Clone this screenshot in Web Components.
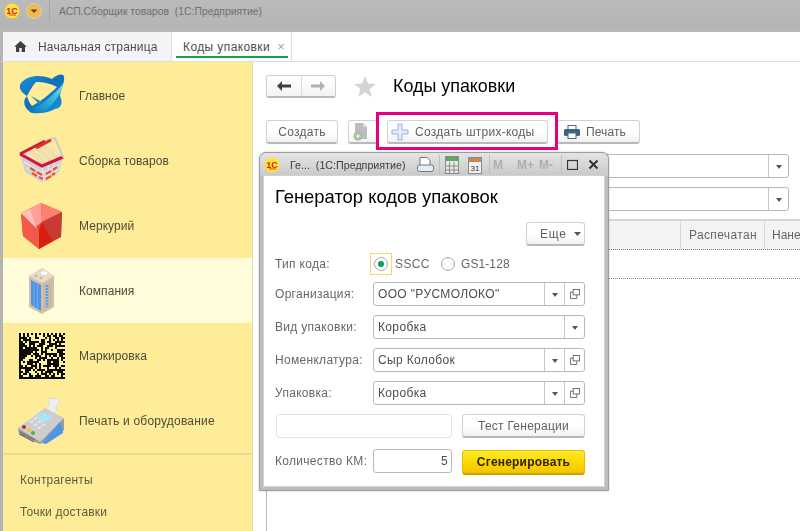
<!DOCTYPE html>
<html lang="ru"><head><meta charset="utf-8"><title>Коды упаковки</title>
<style>
html,body{margin:0;padding:0;width:800px;height:531px;overflow:hidden;background:#fff;font:12px "Liberation Sans",Arial,sans-serif;color:#444}
</style></head><body>
<template id="t-shell"><style>
:host{display:flex;flex-direction:column;width:800px;height:531px;position:relative;overflow:hidden;filter:blur(.4px)}
.body{flex:1;display:flex;min-height:0;border-left:3px solid #b4b4b4}
</style><slot name="title"></slot><slot name="tabs"></slot><div class="body"><slot name="side"></slot><slot name="main"></slot></div><slot name="over"></slot></template>

<template id="t-logo"><style>
:host{display:block;flex:none;width:16px;height:16px}svg{display:block}
</style><svg width="16" height="16" viewBox="0 0 16 16"><circle cx="8" cy="8" r="7.500" fill="#ffe23a"/><text x="8" y="11" text-anchor="middle" font-family="Liberation Sans" font-weight="700" font-size="9" fill="#d9202a">1С</text><path d="M5 12h7" stroke="#d9202a" stroke-width=".8"/></svg></template>

<template id="t-title"><style>
:host{display:flex;align-items:center;height:32px;background:linear-gradient(#bbb,#b5b5b5 80%,#b9b9b9);padding:0 0 10px 4px;box-sizing:border-box;font-size:10.400px;color:#6f6f6f}
svg{display:block;flex:none}.sep{width:1px;height:22px;background:#a6a6a6;margin:0 9px 0 7px}.t{white-space:pre}
</style><x-logo></x-logo><svg style="margin-left:6px" width="16" height="16" viewBox="0 0 16 16"><circle cx="8" cy="8" r="7.500" fill="#f1bb53" stroke="#d7d0bd"/><path d="M4.500 6.500h7L8 10z" fill="#5f4a20"/></svg>
<div class="sep"></div><span class="t"><slot></slot></span></template>

<template id="t-tabs"><style>
:host{display:flex;height:30px;background:#fff;border-left:3px solid #b4b4b4;box-sizing:border-box;border-bottom:1px solid #ddd;font-size:12px;color:#4d4d4d}
.tab{display:flex;align-items:center;background:#f6f3f7;box-sizing:border-box}
.home{width:169px;padding-left:11px;gap:11px;border-right:1px solid #e2e0e2;letter-spacing:.2px}
.cur{width:120px;padding-left:11px;background:#fff;position:relative;border-right:1px solid #ddd;letter-spacing:.4px}
.cur::after{content:"";position:absolute;left:4px;right:3px;bottom:3px;height:2px;background:#16a34f}
.x{margin-left:7px;color:#a4a4a4;font-size:13px;letter-spacing:0}
.rest{flex:1;background:#fff}
</style><div class="tab home"><svg width="13" height="11" viewBox="0 0 15 13"><path d="M7.500 0L0 6.800h2.200V13h3.900V8.400h2.800V13h3.900V6.800H15z" fill="#3f3f3f"/></svg><span>Начальная страница</span></div><div class="tab cur"><span>Коды упаковки</span><span class="x">×</span></div><div class="rest"></div></template>

<template id="t-sidebar"><style>
:host{display:flex;flex-direction:column;width:250px;flex:none;background:#ffec99;box-sizing:border-box;height:100%;border-right:1px solid #e5dcae;padding-top:1px}
.foot{border-top:2px solid #ecdc92;padding:9px 0 0 17px;display:flex;flex-direction:column;color:#5f5a3c;letter-spacing:.2px}
.foot ::slotted(span){height:32px;display:flex;align-items:center}
</style><slot></slot><div class="foot"><slot name="foot"></slot></div></template>

<template id="t-side"><style>
:host{display:flex;align-items:center;height:65px;box-sizing:border-box;padding-left:15px;gap:14px;color:#4e4b38;letter-spacing:.06px}
:host([active]){background:#fffcd9}
.i{width:47px;height:50px;display:flex;align-items:center;justify-content:center;flex:none}
</style><div class="i"><slot name="icon"></slot></div><slot></slot></template>

<template id="t-btn"><style>
:host{display:inline-flex;align-items:center;justify-content:center;height:24px;box-sizing:border-box;padding:0 4px;gap:6px;border:1px solid #d2d2d2;border-bottom:2px solid #b9b9b9;border-radius:3px;background:linear-gradient(#fff,#fff 50%,#f1f1f1);color:#5f5f5f;letter-spacing:.25px;white-space:nowrap;flex:none}
:host([primary]){background:linear-gradient(#ffea28,#fbd400 60%,#f2c400);border-color:#e3bd00;border-bottom-color:#c9a400;color:#2c2300;font-weight:700;letter-spacing:.2px}
:host([start]){justify-content:flex-start}
::slotted(svg){flex:none}
</style><slot></slot></template>

<template id="t-field"><style>
:host{display:flex;height:24px;box-sizing:border-box;border:1px solid #b9b9b9;border-radius:3px;background:#fff;color:#4d4d4d;letter-spacing:.35px;overflow:hidden}
:host([pale]){border-color:#e2e2e2}
.v{flex:1;min-width:0;display:flex;align-items:center;padding:0 3px 0 4px;white-space:nowrap}
:host([right]) .v{justify-content:flex-end}
.b{width:20px;flex:none;display:none;align-items:center;justify-content:center;border-left:1px solid #c6c6c6;box-sizing:border-box}
:host([drop]) .d,:host([open]) .o{display:flex}
.d i{width:0;height:0;border:3.500px solid transparent;border-top:4px solid #555;border-bottom:0;margin-top:1px}
</style><div class="v"><slot></slot></div><div class="b d"><i></i></div><div class="b o"><svg width="10" height="10" viewBox="0 0 11 11" fill="none" stroke="#666"><rect x="3.500" y=".5" width="7" height="6" fill="#fff"/><path d="M3.500 3.500H.5v7h7V6.500"/></svg></div></template>

<template id="t-page"><style>
:host{display:block;flex:1;min-width:0;padding:13px 0 0 13px;box-sizing:border-box;overflow:hidden;background:#fff}
.head{display:flex;align-items:center;height:23px;margin-bottom:22px}
.nav{display:flex;width:70px;height:23px;box-sizing:border-box;border:1px solid #cfcfcf;border-bottom:2px solid #b9b9b9;border-radius:3px;background:linear-gradient(#fff,#f4f4f4)}
.nav div{flex:1;display:flex;align-items:center;justify-content:center}.nav div+div{border-left:1px solid #ddd}
.star{margin:0 17px 0 18px;display:block;flex:none}
h1{font:400 17.900px "Liberation Sans",Arial,sans-serif;color:#000;margin:0}
.bar{display:flex;height:24px;gap:10px;margin-bottom:10px}
.fields{display:flex;flex-direction:column;gap:9px;margin-right:11px}
.tbl{margin-top:8px;border-top:2px solid #d6d6d6;border-left:1px solid #bdbdbd;height:400px}
.th{display:flex;height:29px;box-sizing:border-box;background:#f6f3f7;border-bottom:1px dotted #777;color:#666;letter-spacing:.35px}
.th div{display:flex;align-items:center;box-sizing:border-box;border-right:1px solid #d8d8d8;padding-left:8px;white-space:nowrap}
.r{height:29px;border-bottom:1px dotted #8a8a8a;box-sizing:border-box}
</style>
<div class="head"><div class="nav"><div><svg width="14" height="10" viewBox="0 0 14 10"><path d="M5 0v3.500h9v3H5V10L0 5z" fill="#404040"/></svg></div><div><svg width="14" height="10" viewBox="0 0 14 10"><path d="M9 0v3.500H0v3h9V10l5-5z" fill="#b0b0b0"/></svg></div></div>
<svg class="star" width="22" height="21" viewBox="0 0 22 21"><path d="M11 0l3 7.500 8 .5-6.200 5.100 2 7.900L11 16.500 4.200 21l2-7.900L0 8l8-.5z" fill="#d5d5d5"/></svg><h1>Коды упаковки</h1></div>
<div class="bar"><x-btn style="width:72px">Создать</x-btn>
<x-btn start style="width:30px;padding-left:3px"><svg width="17" height="19" viewBox="0 0 17 19"><path d="M3 1h8l4 4v12H3z" fill="#bdbdbd"/><path d="M11 1v4h4z" fill="#dcdcdc"/><circle cx="6" cy="14" r="4.500" fill="#a3bd9f"/><path d="M6 11.500v5M3.500 14h5" stroke="#fff"/></svg></x-btn>
<x-btn start style="width:161px;margin-left:-1px;padding-left:3px"><svg width="18" height="18" viewBox="0 0 18 18"><path d="M7 1h4v6h6v4h-6v6H7v-6H1V7h6z" fill="#e3edfc" stroke="#8fb4ea" stroke-linejoin="round"/></svg>Создать штрих-коды</x-btn>
<x-btn start style="width:83px;margin-left:-1px;padding-left:6px;letter-spacing:.1px"><svg width="16" height="14" viewBox="0 0 16 14"><rect x="4" y=".5" width="8" height="4" fill="#fff" stroke="#4a6b8a"/><rect x="0" y="4" width="16" height="7" rx="1.500" fill="#3d6288"/><rect x="4" y="8" width="8" height="5.500" fill="#fff" stroke="#4a6b8a"/></svg>Печать</x-btn></div>
<div class="fields"><x-field drop></x-field><x-field drop></x-field></div>
<div class="tbl"><div class="th"><div style="flex:1"></div><div style="width:84px;flex:none">Распечатан</div><div style="width:35px;flex:none;border:0;letter-spacing:0;padding-left:7px">Нане</div></div><div class="r"></div></div></template>

<template id="t-dialog"><style>
:host{position:absolute;left:259px;top:152px;width:350px;height:339px;box-sizing:border-box;display:flex;flex-direction:column;background:#bdbdbd;border:1px solid #9d9d9d;border-radius:7px 7px 0 0;box-shadow:0 0 2px rgba(0,0,0,.25)}
.cap{height:23px;display:flex;align-items:center;flex:none;padding:0 0 0 4px;background:linear-gradient(#e4e4e4,#c9c9c9);border-radius:6px 6px 0 0;font-size:10.700px;color:#3d3d3d;white-space:pre}
.cap .tt{margin-left:10px;width:116px;flex:none}
.cap svg{display:block;flex:none}
.s{width:1px;height:19px;background:#bfbfbf;flex:none}
.m{color:#b3ada5;font-weight:700;font-size:12px;flex:none;box-sizing:border-box}
.body{flex:1;margin:0 4px 4px;background:#fff;padding:10px 19px 0 11px;min-height:0;box-shadow:0 0 0 1px #d2d2d2}
h2{font:400 18.400px "Liberation Sans",Arial,sans-serif;color:#000;margin:0;height:22px;line-height:22px}
.more{display:flex;justify-content:flex-end;margin:14px 0 7px}
.grid{display:grid;grid-template-columns:98px 212px;row-gap:9px;align-items:center;color:#666;letter-spacing:.3px}
.grid>.first{margin-bottom:-2px}
.radio{display:flex;align-items:center;height:22px;color:#666}
.focus{width:22px;height:22px;box-sizing:border-box;border:1px solid #f8d66a;margin-left:-3px;display:flex;align-items:center;justify-content:center}
.rb{width:14px;height:14px;box-sizing:border-box;border:1px solid #a9a9a9;border-radius:50%;display:flex;align-items:center;justify-content:center;background:#fff}
.rb i{width:6px;height:6px;border-radius:50%;background:#0f9d58}
.two{display:flex;gap:10px;align-items:center}
.row3{grid-column:1/-1;display:grid;column-gap:10px}
</style>
<div class="cap"><x-logo></x-logo>
<span class="tt">Ге...  (1С:Предприятие)</span>
<svg style="margin-left:11px" width="17" height="15" viewBox="0 0 17 15"><path d="M3 .5h7l3 3V9H3z" fill="#fff" stroke="#777"/><rect x=".5" y="8" width="16" height="6.500" rx="2" fill="#e8edf2" stroke="#6d7a88"/></svg><span class="s" style="margin:0 5px"></span>
<svg width="14" height="18" viewBox="0 0 14 18"><rect x=".5" y=".5" width="13" height="17" fill="#e7e7e7" stroke="#8a8a8a"/><rect x="1" y="1" width="12" height="4" fill="#58ab57"/><path d="M4.500 6v11M9 6v11M1 10h12M1 14h12" stroke="#8a8a8a"/></svg>
<svg style="margin-left:9px" width="14" height="18" viewBox="0 0 14 18"><rect x=".5" y="1.500" width="13" height="16" fill="#f2f2f2" stroke="#8a8a8a"/><rect x="1" y="2" width="12" height="4" fill="#c8875b"/><text x="7" y="15" font-size="8" text-anchor="middle" fill="#333" font-family="Liberation Sans">31</text></svg>
<span class="s" style="margin:0 3px 0 7px"></span>
<span class="m" style="width:24px">М</span><span class="m" style="width:22px">М+</span><span class="m" style="width:21px">М-</span>
<span class="s" style="margin:0 5px 0 1px"></span>
<svg width="11" height="11" viewBox="0 0 11 11"><rect x=".5" y="1.500" width="10" height="9" fill="none" stroke="#333" stroke-width="1.200"/></svg>
<svg style="margin-left:10px" width="11" height="11" viewBox="0 0 11 11"><path d="M1.500 1.500l8 8M9.500 1.500l-8 8" stroke="#333" stroke-width="2"/></svg></div>
<div class="body"><h2><slot name="heading"></slot></h2><div class="more"><x-btn start style="width:59px;padding-left:13px;gap:7px;letter-spacing:.8px">Еще<svg width="7" height="4" viewBox="0 0 7 4"><path d="M0 0h7L3.500 4z" fill="#555"/></svg></x-btn></div>
<div class="grid">
<span class="first">Тип кода:</span><div class="radio first"><div class="focus"><span class="rb"><i></i></span></div><span style="margin-left:3px;letter-spacing:.4px">SSCC</span><span class="rb" style="margin:0 6px 0 11px"></span><span style="letter-spacing:.1px">GS1-128</span></div>
<span>Организация:</span><x-field drop open>ООО "РУСМОЛОКО"</x-field>
<span>Вид упаковки:</span><x-field drop>Коробка</x-field>
<span>Номенклатура:</span><x-field drop open>Сыр Колобок</x-field>
<span>Упаковка:</span><x-field drop open>Коробка</x-field>
<div class="row3" style="margin-left:1px;width:309px;grid-template-columns:176px 123px"><x-field pale></x-field><x-btn style="width:123px">Тест Генерации</x-btn></div>
<span style="white-space:nowrap">Количество КМ:</span><div class="two"><x-field right style="width:79px">5</x-field><x-btn primary style="width:123px;height:25px;margin-top:3px">Сгенерировать</x-btn></div>
</div></div></template>

<template id="t-mark"><style>:host{position:absolute;left:376px;top:112px;width:182px;height:38px;box-sizing:border-box;border:3px solid #e6007e;pointer-events:none}</style></template>

<x-shell>
<x-title slot="title">АСП.Сборщик товаров  (1С:Предприятие)</x-title>
<x-tabs slot="tabs"></x-tabs>
<x-sidebar slot="side">
<x-side><svg slot="icon" width="47" height="48" viewBox="0 0 47 48"><defs><linearGradient id="g1" x1="0" y1="0" x2="1" y2="1"><stop offset="0" stop-color="#1c8fd6"/><stop offset=".5" stop-color="#0d6fbc"/><stop offset="1" stop-color="#1a9ad9"/></linearGradient><linearGradient id="g2" x1="0" y1="1" x2="1" y2="0"><stop offset="0" stop-color="#0f7cc6"/><stop offset=".6" stop-color="#39b9dc"/><stop offset="1" stop-color="#8fd6ea"/></linearGradient></defs><path d="M3 11C9 3 24 2 34 7 39 2 46 1 46 5 47 10 43 16 42 24 45 30 44 36 37 37 30 41 22 42 14 41 8 38 3 30 9 24 3 20 0 16 3 11Z" fill="url(#g1)"/><path d="M18 10C24 10 32 11 39 15 32 22 22 30 14 34 11 31 10 27 9 24 12 19 14 14 18 10Z" fill="#ffec99"/><path d="M14 36C24 34 34 24 45 12 44 20 38 30 28 38 22 41 16 40 14 36Z" fill="url(#g2)"/><path d="M13 24l11 6-3 2z" fill="#1a8fcf"/></svg>Главное</x-side>
<x-side><svg slot="icon" width="47" height="48" viewBox="0 0 47 48"><path d="M2 17L7 35 25 46 41 35 45 20 24 29Z" fill="#cfd0d4"/><path d="M2 17L27 4 45 20 24 29Z" fill="#f4dfa0"/><g stroke="#ece9df" stroke-width="1.200" fill="none"><path d="M8 14L24 29 26 46M14 11L30 25 31 42M20 8L36 22 36 39M27 6L42 20M6 25L25 36 43 27M9 31L25 41 41 32"/></g><path d="M12 31l5 3M19 35l5 3M28 37l5-3M35 33l4-3M14 36l5 3M21 40l4 2M28 42l5-3M34 38l3-2" stroke="#f4502f" stroke-width="2.200"/><path d="M2 17L27 4M2 17L24 29 45 20" fill="none" stroke="#d3163f" stroke-width="3"/><path d="M27 4L37 1 45 20" fill="none" stroke="#c9c9d0" stroke-width="2"/><path d="M18 11L33 3" stroke="#d9322b" stroke-width="3"/></svg>Сборка товаров</x-side>
<x-side><svg slot="icon" width="47" height="48" viewBox="0 0 47 48"><path d="M23 1L44 10 43 35 21 47 5 34 3 11Z" fill="#e8443a"/><path d="M3 11L23 1 24 20 7 33Z" fill="#ffa096"/><path d="M23 1L44 10 24 20Z" fill="#ff7f72"/><path d="M44 10L43 35 33 40 24 20Z" fill="#c63c35"/><path d="M24 20L35 39 21 47 21 28Z" fill="#d8200f"/><path d="M3 11L21 28 21 47 5 34Z" fill="#f5584a"/><path d="M3 11L12 7 19 27Z" fill="#ffc0b8"/></svg>Меркурий</x-side>
<x-side active><svg slot="icon" width="47" height="48" viewBox="0 0 47 48"><path d="M11 9L24 1 36 9 36 40 24 47 11 40Z" fill="#d2c0a6"/><path d="M11 9L24 1 36 9 24 16Z" fill="#e6dccb"/><path d="M13 13L23 18 23 44 13 38Z" fill="#4d93e6"/><path d="M16 14.500V40M19.500 16.500V42" stroke="#7fb2ee" stroke-width=".8"/><path d="M25 18L34 13 34 38 25 44Z" fill="#cdb99d"/><path d="M29 17V40" stroke="#5d9be6" stroke-width="2.500"/><path d="M29 17V40" stroke="#eee" stroke-width="1" stroke-dasharray="1 2"/><ellipse cx="26" cy="6" rx="3" ry="1.800" fill="#fff"/><circle cx="18" cy="9" r="1.500" fill="#bbb"/><circle cx="23" cy="11" r="1.500" fill="#bbb"/></svg>Компания</x-side>
<x-side><svg slot="icon" id="dm" width="46" height="46" viewBox="0 0 23 23" shape-rendering="crispEdges"></svg>Маркировка</x-side>
<x-side style="letter-spacing:.2px"><svg slot="icon" width="47" height="48" viewBox="0 0 47 48"><path d="M30 2L39 1 42 5 39 8 38 14 35 19 27 13 31 8Z" fill="#eeeeec" stroke="#cfcfcc" stroke-width=".6"/><path d="M0 31L1 38 22 47 46 33 46 21 22 40Z" fill="#9c9c9e"/><path d="M0 31L27 11 46 21 22 45Z" fill="#cdcdcf"/><path d="M18 19L25 15 34 20 25 26Z" fill="#a9e4f7"/><g fill="#e3e3e5"><path d="M11 25l3-2 2 1.500-3 2zM15 28l3-2 2 1.500-3 2zM19 31l3-2 2 1.500-3 2zM15 22l3-2 2 1.500-3 2zM19 25l3-2 2 1.500-3 2zM23 28l3-2 2 1.500-3 2z"/></g><path d="M24 46L42 25 45 34 45 36 28 47Z" fill="#4d96ea"/><circle cx="6" cy="30" r="2" fill="#c9252c"/><circle cx="11" cy="33" r="2" fill="#f1c62c"/><circle cx="15" cy="36" r="2" fill="#4fae4a"/><path d="M2 35L17 43M2 37L16 45" stroke="#6f6f6f" stroke-width="1.200"/></svg>Печать и оборудование</x-side>
<span slot="foot">Контрагенты</span><span slot="foot">Точки доставки</span>
</x-sidebar>
<x-page slot="main"></x-page>
<x-mark slot="over"></x-mark>
<x-dialog slot="over"><span slot="heading">Генератор кодов упаковок</span></x-dialog>
</x-shell>
<script>
const def=(n,t)=>customElements.define(n,class extends HTMLElement{constructor(){super();this.attachShadow({mode:"open"}).append(document.getElementById(t).content.cloneNode(true));}});
[["x-logo","t-logo"],["x-btn","t-btn"],["x-field","t-field"],["x-shell","t-shell"],["x-title","t-title"],["x-tabs","t-tabs"],["x-sidebar","t-sidebar"],["x-side","t-side"],["x-page","t-page"],["x-dialog","t-dialog"],["x-mark","t-mark"]].forEach(a=>def(...a));
const dm=document.getElementById("dm");let s=7,h='<rect width="23" height="23" fill="#fff39e"/>';
for(let y=0;y<23;y++)for(let x=0;x<23;x++){s=(s*1103515245+12345)&0x7fffffff;const r=(s>>16)%100;
const on=x==0||y==22||(y==0&&x%2==0)||(x==22&&y%2==0)||(x>0&&y<22&&x<22&&y>0&&r<58);
if(on)h+=`<rect x="${x}" y="${y}" width="1" height="1" fill="#0b0b0b"/>`;}
dm.innerHTML=h;
</script></body></html>
